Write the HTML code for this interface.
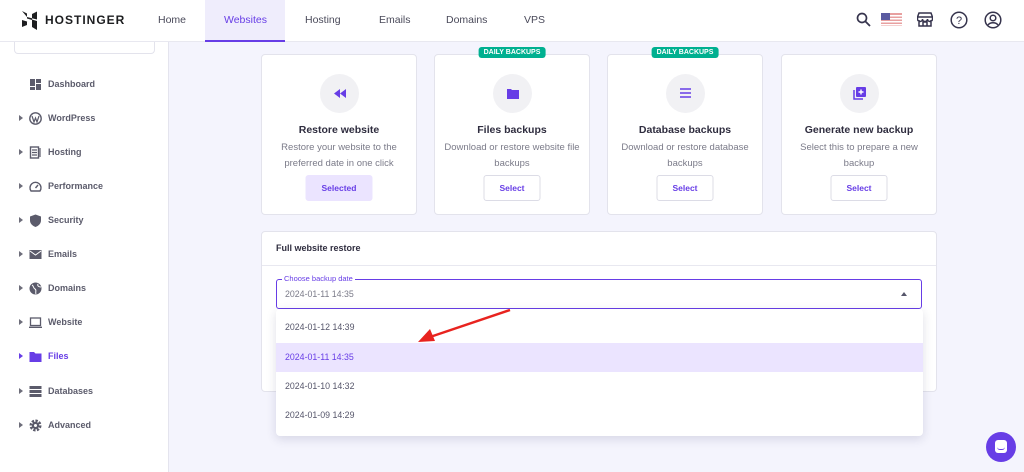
<!DOCTYPE html>
<html><head><style>
*{box-sizing:border-box;margin:0;padding:0}
body{width:1024px;height:472px;overflow:hidden;background:#f4f4fd;font-family:"Liberation Sans",sans-serif;position:relative;color:#36344d}
.hdr{position:absolute;left:0;top:0;width:1024px;height:42px;background:#fff;border-bottom:1px solid #e8e8f0;z-index:3}
.nav{position:absolute;top:14px;font-size:10.5px;color:#4a4a5a}
.side{position:absolute;left:0;top:42px;width:169px;height:430px;background:#fff;border-right:1px solid #e4e4ee}
.si{position:absolute;left:0;height:16px;width:169px;font-size:9px;font-weight:bold;color:#5b5b6b}
.si .ar{position:absolute;left:19px;top:4px;width:0;height:0;border-left:4px solid #6d6d7a;border-top:3.5px solid transparent;border-bottom:3.5px solid transparent}
.si .ic{position:absolute;left:29px;top:1px;width:13px;height:13px}
.si .t{position:absolute;left:48px;top:2px}
.card{position:absolute;top:54px;width:156px;height:161px;background:#fff;border:1px solid #e3e3ec;border-radius:4px;text-align:center}
.circ{position:absolute;left:58px;top:19px;width:39px;height:39px;border-radius:50%;background:#f1f1f4}
.ct{position:absolute;top:69px;width:100%;font-size:10.5px;font-weight:bold;color:#2f2d3f}
.cd{position:absolute;top:85px;left:6px;right:6px;font-size:9.5px;line-height:16px;color:#7b7b89}
.btn{position:absolute;top:120px;left:50%;transform:translateX(-50%);width:57px;height:26px;border:1px solid #dcdce6;border-radius:3px;font-size:8.5px;font-weight:bold;color:#673de6;line-height:24px;background:#fff}
.badge{position:absolute;top:-8px;left:50%;transform:translateX(-50%);background:#00b090;color:#fff;font-size:7px;font-weight:bold;padding:2px 5px;border-radius:3px;white-space:nowrap}
.panel{position:absolute;left:261px;top:231px;width:676px;height:161px;background:#fff;border:1px solid #e3e3ec;border-radius:4px}
.dd{position:absolute;left:276px;top:309px;width:647px;height:127px;background:#fff;border-radius:4px;box-shadow:0 3px 10px rgba(40,40,90,.15)}
.it{position:absolute;left:0;width:100%;height:29px;padding-left:9px;line-height:29px;font-size:8.8px;color:#55556a}
</style></head><body>
<div class="hdr">
 <svg style="position:absolute;left:22px;top:11px" width="15" height="19" viewBox="0 0 15 19"><path d="M0 0l5 2.5v5l5 1.5V3l5-2.5v8L5 6v0zM0 9l10 3v4l5 3V10l-5-1.5V12L5 10.5V14L0 16z" fill="#1d1e20"/></svg>
 <div style="position:absolute;left:45px;top:13px;font-size:12px;font-weight:bold;letter-spacing:1px;color:#1d1e20">HOSTINGER</div>
 <div class="nav" style="left:158px">Home</div>
 <div style="position:absolute;left:205px;top:0;width:80px;height:42px;background:#efedfc;border-bottom:2px solid #673de6"></div>
 <div class="nav" style="left:224px;color:#673de6">Websites</div>
 <div class="nav" style="left:305px">Hosting</div>
 <div class="nav" style="left:379px">Emails</div>
 <div class="nav" style="left:446px">Domains</div>
 <div class="nav" style="left:524px">VPS</div>
 <svg style="position:absolute;left:856px;top:12px" width="15" height="15" viewBox="0 0 15 15"><circle cx="6" cy="6" r="4.5" fill="none" stroke="#36344d" stroke-width="1.7"/><path d="M9.5 9.5L14 14" stroke="#36344d" stroke-width="1.8"/></svg>
 <svg style="position:absolute;left:881px;top:13px" width="21" height="13"><rect width="21" height="13" fill="#e8a0a0"/><rect y="2" width="21" height="1.5" fill="#fff"/><rect y="5" width="21" height="1.5" fill="#fff"/><rect y="8" width="21" height="1.5" fill="#fff"/><rect y="11" width="21" height="1.5" fill="#fff"/><rect width="9" height="7" fill="#5a5aa0"/></svg>
 <svg style="position:absolute;left:917px;top:12px" width="16" height="15" viewBox="0 0 16 15"><path d="M2 1h12l1.5 4H.5zM.5 5v2a2.5 2.5 0 005 0 2.5 2.5 0 005 0 2.5 2.5 0 005 0V5M2 8v6h12V8M6 14V10h4v4" fill="none" stroke="#36344d" stroke-width="1.5"/></svg>
 <svg style="position:absolute;left:950px;top:11px" width="18" height="18"><circle cx="9" cy="9" r="7.8" fill="none" stroke="#36344d" stroke-width="1.5"/><text x="9" y="13" text-anchor="middle" font-size="11" font-family="Liberation Sans" fill="#36344d">?</text></svg>
 <svg style="position:absolute;left:984px;top:11px" width="18" height="18"><circle cx="9" cy="9" r="7.8" fill="none" stroke="#36344d" stroke-width="1.5"/><circle cx="9" cy="7" r="2.8" fill="none" stroke="#36344d" stroke-width="1.5"/><path d="M4 14c2-3 8-3 10 0" fill="none" stroke="#36344d" stroke-width="1.5"/></svg>
</div>
<div class="side">
 <div style="position:absolute;left:14px;top:-6px;width:141px;height:18px;border:1px solid #e3e3ec;border-top:none;border-radius:0 0 4px 4px"></div>
 <div class="si" style="top:35px"><svg class="ic" viewBox="0 0 13 13"><rect x="1" y="1" width="5" height="7" fill="#5b5b6b"/><rect x="7" y="1" width="5" height="4" fill="#5b5b6b"/><rect x="7" y="6" width="5" height="6" fill="#5b5b6b"/><rect x="1" y="9" width="5" height="3" fill="#5b5b6b"/></svg><span class="t">Dashboard</span></div>
 <div class="si" style="top:69px"><i class="ar"></i><svg class="ic" viewBox="0 0 13 13"><circle cx="6.5" cy="6.5" r="5.7" fill="none" stroke="#5b5b6b" stroke-width="1.4"/><path d="M3 4l2 6 1.5-4 1.5 4 2-6" fill="none" stroke="#5b5b6b" stroke-width="1.2"/></svg><span class="t">WordPress</span></div>
 <div class="si" style="top:103px"><i class="ar"></i><svg class="ic" viewBox="0 0 13 13"><rect x="1.5" y="1" width="8" height="11" fill="none" stroke="#5b5b6b" stroke-width="1.4"/><path d="M3 4h5M3 6.5h5M3 9h5M11 2v9" stroke="#5b5b6b" stroke-width="1.2"/></svg><span class="t">Hosting</span></div>
 <div class="si" style="top:137px"><i class="ar"></i><svg class="ic" viewBox="0 0 13 13"><path d="M2 11a5.5 5.5 0 119 0z" fill="none" stroke="#5b5b6b" stroke-width="1.4"/><path d="M6.5 8l2.5-3" stroke="#5b5b6b" stroke-width="1.4"/></svg><span class="t">Performance</span></div>
 <div class="si" style="top:171px"><i class="ar"></i><svg class="ic" viewBox="0 0 13 13"><path d="M6.5 .5L12 2.5v4c0 3-2.5 5.5-5.5 6.5C3.5 12 1 9.5 1 6.5v-4z" fill="#5b5b6b"/></svg><span class="t">Security</span></div>
 <div class="si" style="top:205px"><i class="ar"></i><svg class="ic" viewBox="0 0 13 13"><rect x=".5" y="2" width="12" height="9" fill="#5b5b6b"/><path d="M1 3l5.5 4L12 3" fill="none" stroke="#fff" stroke-width="1"/></svg><span class="t">Emails</span></div>
 <div class="si" style="top:239px"><i class="ar"></i><svg class="ic" viewBox="0 0 13 13"><circle cx="6.5" cy="6.5" r="6" fill="#5b5b6b"/><path d="M3 3c2 1 1 3 3 4s0 3 1 5M9 2c-1 2 1 3 3 3" fill="none" stroke="#fff" stroke-width="1"/></svg><span class="t">Domains</span></div>
 <div class="si" style="top:273px"><i class="ar"></i><svg class="ic" viewBox="0 0 13 13"><rect x="1.5" y="2" width="10" height="7.5" fill="none" stroke="#5b5b6b" stroke-width="1.3"/><path d="M0 11.3h13" stroke="#5b5b6b" stroke-width="1.4"/></svg><span class="t">Website</span></div>
 <div class="si" style="top:307px;color:#673de6"><i class="ar" style="border-left-color:#673de6"></i><svg class="ic" viewBox="0 0 13 13"><path d="M.5 2h4.5l1.5 1.5h6v8.5H.5z" fill="#673de6"/></svg><span class="t">Files</span></div>
 <div class="si" style="top:342px"><i class="ar"></i><svg class="ic" viewBox="0 0 13 13"><rect x=".5" y="1" width="12" height="3" fill="#5b5b6b"/><rect x=".5" y="5" width="12" height="3" fill="#5b5b6b"/><rect x=".5" y="9" width="12" height="3" fill="#5b5b6b"/></svg><span class="t">Databases</span></div>
 <div class="si" style="top:376px"><i class="ar"></i><svg class="ic" viewBox="0 0 13 13"><circle cx="6.5" cy="6.5" r="4.5" fill="none" stroke="#5b5b6b" stroke-width="3" stroke-dasharray="2.2 1.3"/><circle cx="6.5" cy="6.5" r="3.6" fill="#5b5b6b"/><circle cx="6.5" cy="6.5" r="1.5" fill="#fff"/></svg><span class="t">Advanced</span></div>
</div>

<div class="card" style="left:261px"><div class="circ"><svg style="margin-top:15px" width="12" height="9" viewBox="0 0 12 9"><path d="M6 0v9L0 4.5zM12 0v9L6 4.5z" fill="#673de6"/></svg></div><div class="ct">Restore website</div><div class="cd">Restore your website to the preferred date in one click</div><div class="btn" style="width:67px;background:#ebe4ff;border-color:#ebe4ff">Selected</div></div>
<div class="card" style="left:434px"><div class="badge">DAILY BACKUPS</div><div class="circ"><svg style="margin-top:14px" width="12" height="11" viewBox="0 0 12 11"><path d="M0 1h4l1 1h7v9H0z" fill="#673de6"/></svg></div><div class="ct">Files backups</div><div class="cd">Download or restore website file backups</div><div class="btn">Select</div></div>
<div class="card" style="left:607px"><div class="badge">DAILY BACKUPS</div><div class="circ"><svg style="margin-top:14px" width="11" height="10" viewBox="0 0 11 10"><path d="M0 1h11M0 5h11M0 9h11" stroke="#673de6" stroke-width="1.6"/></svg></div><div class="ct">Database backups</div><div class="cd">Download or restore database backups</div><div class="btn">Select</div></div>
<div class="card" style="left:781px"><div class="circ"><svg style="margin-top:13px" width="13" height="13" viewBox="0 0 13 13"><rect x="3" y="0" width="10" height="10" rx="1" fill="#673de6"/><path d="M1 3v9h9" fill="none" stroke="#673de6" stroke-width="1.5"/><path d="M8 2.5v5M5.5 5h5" stroke="#fff" stroke-width="1.4"/></svg></div><div class="ct">Generate new backup</div><div class="cd">Select this to prepare a new backup</div><div class="btn">Select</div></div>

<div class="panel">
 <div style="position:absolute;left:14px;top:11px;font-size:9px;font-weight:bold;color:#2f2d3f">Full website restore</div>
 <div style="position:absolute;left:0;top:33px;width:100%;height:1px;background:#e8e8f0"></div>
</div>
<div style="position:absolute;left:276px;top:279px;width:646px;height:30px;border:1.5px solid #673de6;border-radius:3px;background:#fff"></div>
<div style="position:absolute;left:282px;top:274px;padding:0 2px;background:#fff;font-size:7.5px;color:#673de6">Choose backup date</div>
<div style="position:absolute;left:285px;top:289px;font-size:8.8px;color:#7b7b89">2024-01-11 14:35</div>
<div style="position:absolute;left:901px;top:292px;width:0;height:0;border-bottom:4px solid #55556a;border-left:3.5px solid transparent;border-right:3.5px solid transparent"></div>
<div class="dd">
 <div class="it" style="top:4px">2024-01-12 14:39</div>
 <div class="it" style="top:34px;background:#ebe4ff;color:#673de6">2024-01-11 14:35</div>
 <div class="it" style="top:63px">2024-01-10 14:32</div>
 <div class="it" style="top:92px">2024-01-09 14:29</div>
</div>
<svg style="position:absolute;left:410px;top:306px" width="105" height="40"><path d="M100 4L20 31" stroke="#e8231f" stroke-width="2.5"/><path d="M8 36l12-13 5 12z" fill="#e8231f"/></svg>
<div style="position:absolute;left:986px;top:432px;width:30px;height:30px;border-radius:50%;background:#673de6"><div style="position:absolute;left:9px;top:8px;width:12px;height:13px;border-radius:3px;background:#fff"></div><div style="position:absolute;left:11px;top:15px;width:8px;height:3px;border-bottom:1.2px solid #673de6;border-radius:0 0 4px 4px"></div></div>
</body></html>
